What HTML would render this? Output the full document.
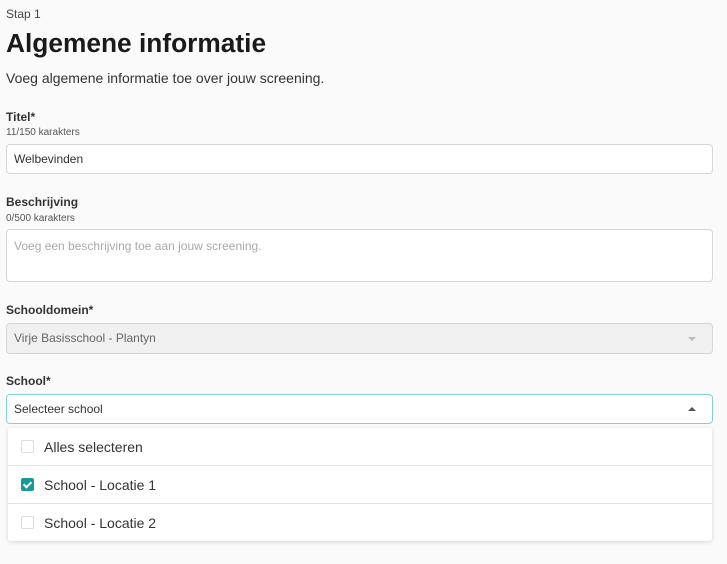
<!DOCTYPE html>
<html><head><style>
body{margin:0;background:#fafafa;font-family:"Liberation Sans",sans-serif;color:#222;width:727px;height:564px;overflow:hidden;position:relative}
.a{position:absolute;left:6px;white-space:nowrap}
.box{position:absolute;left:6px;width:707px;border:1px solid #d6d6d6;border-radius:4px;background:#fff;box-sizing:border-box;font-size:12px;padding-left:7px;color:#333}
.lbl{font-size:12px;font-weight:bold;color:#333}
.sm{font-size:10px;color:#555}
.dd{position:absolute;left:8px;width:704px;top:428px;height:113px;background:#fff;box-shadow:0 1px 4px rgba(0,0,0,.15);border-radius:3px}
.row{height:37px;border-bottom:1px solid #e4e4e4;display:flex;align-items:center;font-size:14px;color:#333}
.row:last-child{border:none}
.cb{width:11px;height:11px;border:1px solid #ddd;border-radius:2px;margin:0 10px 0 13px;background:#fff}
.cb.on{background:#169b9b;border-color:#169b9b;position:relative}
.cb.on:after{content:"";position:absolute;left:3px;top:1px;width:3px;height:6px;border:solid #fff;border-width:0 2px 2px 0;transform:rotate(45deg)}
</style></head><body>
<div class="a" style="top:7px;font-size:12px;color:#444">Stap 1</div>
<div class="a" style="top:28px;font-size:26.3px;font-weight:bold;color:#1a1a1a">Algemene informatie</div>
<div class="a" style="top:70px;font-size:14px;color:#333">Voeg algemene informatie toe over jouw screening.</div>
<div class="a lbl" style="top:110px">Titel*</div>
<div class="a sm" style="top:127px">11/150 karakters</div>
<div class="box" style="top:144px;height:30px;line-height:28px">Welbevinden</div>
<div class="a lbl" style="top:195px">Beschrijving</div>
<div class="a sm" style="top:213px">0/500 karakters</div>
<div class="box" style="top:229px;height:53px;padding-top:9px;color:#aaa">Voeg een beschrijving toe aan jouw screening.</div>
<div class="a lbl" style="top:303px">Schooldomein*</div>
<div class="box" style="top:323px;height:31px;line-height:29px;background:#f0f0f0;color:#666">Virje Basisschool - Plantyn<span style="position:absolute;right:16px;top:13px;border:4px solid transparent;border-top:4px solid #bbb;border-bottom:0"></span></div>
<div class="a lbl" style="top:374px">School*</div>
<div class="box" style="top:394px;height:30px;line-height:28px;border-color:#7fd3d3">Selecteer school<span style="position:absolute;right:16px;top:12px;border:4px solid transparent;border-bottom:4px solid #555;border-top:0"></span></div>
<div class="dd">
<div class="row"><span class="cb"></span>Alles selecteren</div>
<div class="row"><span class="cb on"></span>School - Locatie 1</div>
<div class="row"><span class="cb"></span>School - Locatie 2</div>
</div>
</body></html>
